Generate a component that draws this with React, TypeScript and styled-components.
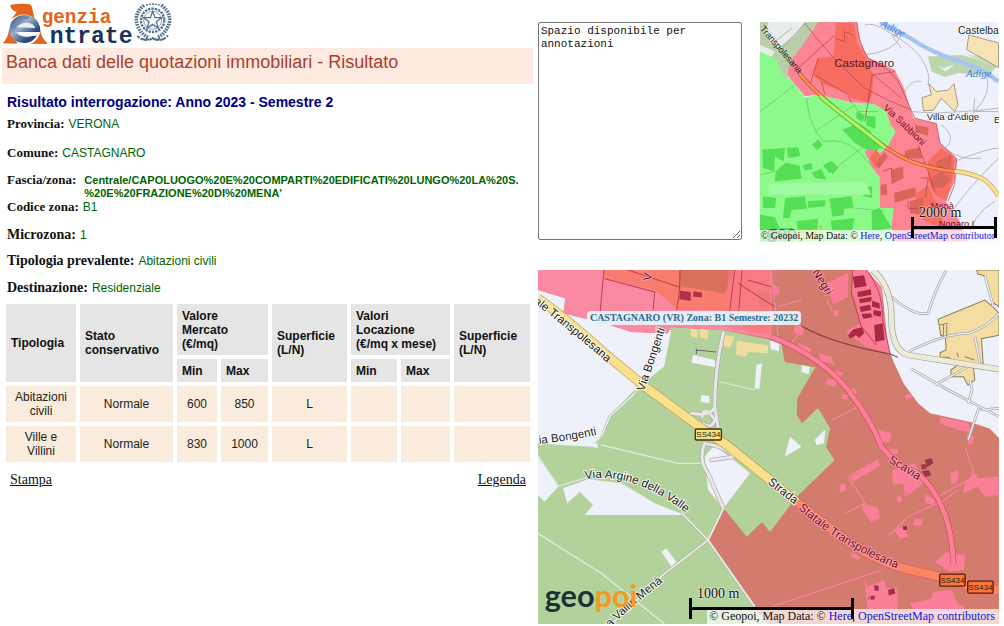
import React from "react";
import styled, { createGlobalStyle } from "styled-components";

const SANS = '"Liberation Sans", Arial, sans-serif';
const SERIF = '"Liberation Serif", "Times New Roman", serif';
const MONO = '"Liberation Mono", "Courier New", monospace';

const GlobalStyle = createGlobalStyle`
  *, *::before, *::after { box-sizing: border-box; }
  body { margin: 0; background: #fff; color: #111; font-family: ${SERIF}; }
`;

const Page = styled.div`
  display: grid;
  grid-template-columns: minmax(0, 7fr) minmax(0, 6fr);
  padding-right: 5px;
`;

const Report = styled.main`
  display: flex;
  flex-direction: column;
  overflow: hidden;
`;

const LogoDrawing = styled.svg`
  display: block;
  width: 180px;
  height: 48px;
`;

const Banner = styled.h1`
  margin: 0 5px 0 2px;
  padding: 4px 4px 12px;
  background: #feeae0;
  color: #a8402c;
  font: 400 18px/20px ${SANS};
`;

const Heading = styled.h2`
  margin: 8px 7px 5px;
  color: #000080;
  font: 700 14px/20px ${SANS};
`;

const Fields = styled.dl`
  margin: 0 0 0 7px;
`;

const Field = styled.div<{ $after: number }>`
  display: flex;
  gap: 4px;
  margin-bottom: ${(p) => p.$after}px;
  line-height: 14px;
`;

const Term = styled.dt<{ $large?: boolean }>`
  flex: none;
  font-family: ${SERIF};
  font-size: ${(p) => (p.$large ? 14 : 13)}px;
  font-weight: 700;
`;

const Value = styled.dd<{ $long?: boolean }>`
  margin: 0 0 0 ${(p) => (p.$long ? 4 : 0)}px;
  padding-top: ${(p) => (p.$long ? 1 : 0)}px;
  color: #006400;
  font-family: ${SANS};
  font-size: ${(p) => (p.$long ? 11 : 12)}px;
  font-weight: ${(p) => (p.$long ? 700 : 400)};
  line-height: ${(p) => (p.$long ? 13 : 14)}px;
  white-space: nowrap;
`;

const Quotes = styled.table`
  width: calc(100% - 6px);
  margin-left: 2px;
  table-layout: fixed;
  border-collapse: separate;
  border-spacing: 4px;
  font: 400 12px/14px ${SANS};
`;

const Col = styled.col<{ $w: number }>`
  width: ${(p) => p.$w}px;
`;

const Row = styled.tr<{ $h: number }>`
  height: ${(p) => p.$h}px;
`;

const HeadCell = styled.th`
  padding: 0 5px;
  background: #e5e5e5;
  text-align: left;
  white-space: nowrap;
`;

const Cell = styled.td`
  padding: 0 4px;
  background: #faecdc;
  color: #222;
  text-align: center;
`;

const Actions = styled.nav`
  display: flex;
  justify-content: space-between;
  padding: 6px 12px 0 10px;
  font: 400 14px/16px ${SERIF};
`;

const ActionLink = styled.a`
  color: #111;
`;

const Side = styled.aside`
  display: flex;
  flex-direction: column;
  gap: 28px;
  padding-top: 22px;
`;

const SideTop = styled.div`
  display: grid;
  grid-template-columns: minmax(0, 6fr) minmax(0, 7fr);
  gap: 18px;
`;

const Notes = styled.textarea`
  width: 100%;
  height: calc(100% - 2px);
  padding: 2px;
  border: 1px solid #767676;
  border-radius: 2px;
  background: #fff;
  color: #111;
  font: 400 11px/13px ${MONO};
  resize: both;
`;

const MapFrame = styled.section<{ $ratio: string }>`
  position: relative;
  aspect-ratio: ${(p) => p.$ratio};
  overflow: hidden;
`;

const MapDrawing = styled.svg`
  display: block;
  width: 100%;
  height: 100%;
  font-family: ${SANS};
`;

const Attribution = styled.div<{ $small?: boolean }>`
  position: absolute;
  right: 0;
  bottom: 0;
  padding: 0 4px 0 2px;
  background: rgba(255, 255, 255, 0.7);
  color: #111;
  font-family: ${SERIF};
  font-size: ${(p) => (p.$small ? 10 : 12)}px;
  line-height: ${(p) => (p.$small ? 12 : 15)}px;
  white-space: nowrap;
`;

const MapLink = styled.a`
  color: #1414e0;
  text-decoration: none;
`;

const ScaleBar = styled.div<{ $right: number; $bottom: number; $w: number }>`
  position: absolute;
  right: ${(p) => p.$right}px;
  bottom: ${(p) => p.$bottom}px;
  width: ${(p) => p.$w}px;
  height: 21px;
  border: solid #000;
  border-width: 0 3px;
  background: linear-gradient(#000, #000) center / 100% 3px no-repeat;
`;

const ScaleText = styled.span`
  position: absolute;
  left: 5px;
  bottom: 18px;
  font: 400 14px/15px ${SERIF};
  text-shadow: 0 0 2px #fff, 0 0 2px #fff;
  white-space: nowrap;
`;

const ZoneTip = styled.div`
  position: absolute;
  top: 41px;
  left: 49px;
  padding: 0 3px;
  border-radius: 4px;
  background: rgba(232, 244, 250, 0.92);
  color: #1d6d96;
  font: 700 10px/14px ${SERIF};
  white-space: nowrap;
`;

function AgencyLogo() {
  return (
    <LogoDrawing viewBox="0 0 540 144" role="img" aria-label="Agenzia Entrate">
      <defs>
        <linearGradient id="ball" x1="0" y1="0" x2="1" y2="1">
          <stop offset="0" stopColor="#1b3f72" />
          <stop offset="0.4" stopColor="#9fb0c6" />
          <stop offset="0.7" stopColor="#2c5084" />
          <stop offset="1" stopColor="#0d2550" />
        </linearGradient>
      </defs>
      <path d="M30 15 Q50 10 84 12 Q94 13 96 22 L104 56 Q70 30 34 58 L50 36 Q34 32 30 15Z" fill="#e4641e" />
      <path d="M8 130 Q24 116 28 84 Q32 112 52 128 L50 131Z M92 131 Q116 122 121 92 Q126 116 142 129 L140 132Z" fill="#e4641e" />
      <path d="M28 94 Q28 58 58 47 Q96 38 114 66 Q122 80 121 96 L58 97 Q66 112 92 108 L112 104 Q98 130 72 129 Q32 127 28 94Z" fill="url(#ball)" />
      <path d="M50 82 Q64 64 88 69 Q102 72 106 84Z" fill="#e8edf4" />
      <path d="M48 97 L121 97 Q118 108 98 108 Q66 116 48 97Z" fill="#f8fafc" />
      <path d="M42 86 Q48 50 86 52" fill="none" stroke="#6f89ad" strokeWidth="7" />
      <text x="125" y="70" fontFamily={MONO} fontWeight="700" fontSize="58" fill="#e4641e">genzia</text>
      <text x="149" y="130" fontFamily={MONO} fontWeight="700" fontSize="69" fill="#1a315c">ntrate</text>
      <g fill="none" stroke="#53708f">
        <circle cx="458" cy="61" r="35" strokeWidth="7" strokeDasharray="7 3" />
        <circle cx="458" cy="61" r="27" strokeWidth="2" />
        <path d="M458 34 L465 53 L485 53 L469 65 L475 85 L458 73 L441 85 L447 65 L431 53 L451 53Z" strokeWidth="4" />
        <path d="M432 16 Q402 40 411 72 Q418 98 444 112" strokeWidth="11" strokeDasharray="5 3" />
        <path d="M484 16 Q516 40 507 72 Q498 98 474 112" strokeWidth="11" strokeDasharray="5 3" />
        <path d="M412 108 Q434 128 458 114 Q482 130 504 106 M424 118 L492 118" strokeWidth="6" strokeDasharray="9 3" />
        <path d="M438 16 Q458 8 480 16" strokeWidth="4" strokeDasharray="6 3" />
      </g>
    </LogoDrawing>
  );
}

function OverviewMap() {
  return (
    <MapDrawing viewBox="15 21 717 660" preserveAspectRatio="xMidYMid slice" aria-hidden="true">
      <defs>
        <path id="ov-trans" d="M14 42L140 188" />
        <path id="ov-sabb" d="M384 282Q450 340 520 414" />
        <path id="ov-adige" d="M376 34L480 84" />
      </defs>
      <rect x="15" y="21" width="717" height="660" fill="#eef0fb" />
      {/* fields north-west of the town */}
      <path d="M15 21H190L105 180L90 200L15 120Z" fill="#b9cfa9" />
      <path d="M40 21L150 21L120 60L70 100L30 60Z M15 90L60 110L40 140L15 120Z" fill="#e9ede9" />
      <path d="M80 100L150 25M60 80L110 40" stroke="#999" strokeWidth="2" fill="none" />
      {/* north-east: river and villages */}
      <path d="M520 125L620 120L732 150L700 180L610 175L570 186L530 170Z" fill="#bcd6ae" />
      <path d="M640 120L700 124L732 150L700 150Z" fill="#c9dfbd" />
      <path d="M548 150L565 160L600 148L572 170Z" fill="#eef0fb" />
      <path d="M376 21Q430 48 470 72Q530 112 610 138Q680 160 732 200" fill="none" stroke="#a5c5f0" strokeWidth="13" />
      <path d="M643 60L732 84L732 158L690 134L636 104Z M502 248L530 240L522 206L545 230L580 226L598 206L610 270L600 290L560 250L536 286L506 288Z" fill="#f7e2b4" stroke="#82765c" strokeWidth="2" />
      <g fill="none" stroke="#b9b9bd" strokeWidth="3">
        <path d="M330 30Q350 20 400 50Q470 90 500 130Q530 180 520 210M690 170Q720 230 660 290L732 290M330 120Q420 110 440 60M470 290Q560 300 732 280M600 440Q700 400 732 400M560 330Q610 370 570 400Q620 440 680 430M732 430Q640 520 600 580M640 681Q650 600 720 560" />
        <path d="M440 260Q460 190 500 200M410 60L440 100M660 250L655 320" />
      </g>
      {/* rural zone */}
      <path d="M15 110L60 130L90 190L105 190L150 248L190 240L290 262L380 270L400 300L414 340L422 350L400 392L370 420L345 400L330 410L352 458L374 485L376 580L416 580L410 640L420 681L15 681Z" fill="#8bfa8b" />
      <g fill="#54df55">
        <path d="M262 345L300 330L322 345L345 372L385 388L360 415L325 400L300 385Z M305 290L330 300L325 320L304 310Z M335 302L362 306L362 342L335 332Z M300 340L320 330L350 350L330 376Z" />
        <path d="M172 390L190 374L204 390L186 406Z M22 404L90 400L86 440L60 425L58 470L24 460Z M95 398L130 398L136 424L100 430Z M62 470L92 444L134 452L140 492L60 500Z M142 452L170 444L172 462L150 468Z M170 474L200 462L214 494L180 490Z M204 452L230 438L250 458L226 476Z M230 455L250 460L232 480Z" />
        <path d="M90 550L150 545L156 582L110 586L104 610L84 610Z M158 560L212 556L210 575L160 580Z M224 552L290 545L296 580L268 582L266 602L232 606Z M15 600L60 608L74 640L110 640L120 681L15 681Z M125 620L190 612L186 655L130 660Z M228 618L300 610L292 650L232 652Z M318 520L352 515L352 550L326 545Z M350 590L374 580L412 640L352 648Z M24 545L64 550L60 580L24 580Z" />
      </g>
      <path d="M40 508L330 500L350 540L44 540Z" fill="#a0fba0" />
      <g fill="none" stroke="#5ac65a" strokeWidth="2">
        <path d="M15 290L120 210M155 248Q160 330 205 380Q270 370 310 410Q350 450 370 480M180 350L300 270M315 290L320 370M230 470L320 400M300 580L390 590M15 480L60 470M295 265L310 290L370 290" />
      </g>
      {/* built-up zone */}
      <path d="M190 21H306L316 80L340 128L420 165L448 220L476 310L545 326L556 385L606 432L600 500L572 560L610 610L640 681H420L410 640L416 580L376 580L374 485L352 458L330 410L345 400L370 420L400 392L422 350L408 330L395 290L360 268L290 262L190 240L150 244L105 190L98 180L105 140L150 80Z" fill="#fb8592" />
      <path d="M244 24L298 24L306 80L330 125L356 180L352 240L340 262L290 250L282 236L205 208L172 180L188 130L236 124Z M345 430L365 405L380 425L362 460Z M520 440L560 400L600 430L594 490L575 560L540 540L520 500Z M482 540L520 510L560 600L570 640L510 620L486 600Z" fill="#f76d60" />
      <g fill="#d8665a">
        <path d="M480 330L522 338L520 362L484 352Z M450 408L496 398L502 432L450 430Z M410 465L445 455L446 490L410 510Z M418 535L482 518L484 545L420 565Z M362 450L388 412L400 425L372 462Z M378 510L395 508L398 540L378 542Z M545 440L590 420L590 456L548 466Z M526 490L560 470L590 496L560 520L530 516Z M465 560L505 550L506 600L466 596Z" />
      </g>
      <g fill="none" stroke="#b5404c" strokeWidth="2">
        <path d="M150 25Q220 120 330 220Q400 260 470 285M118 170L240 60M165 210L190 130M200 200L210 240M306 21Q312 90 340 130Q420 165 440 220L480 310L545 326M340 262L352 180L420 170M356 180L440 250M330 320L345 230M240 70L270 80L268 50L296 60M180 180L280 240L290 264M385 470L410 460L412 490M500 490L520 490L512 550M460 560L460 582L500 580M490 390L520 470L540 530M545 326L556 385L606 432L600 510L580 560" />
      </g>
      <path d="M130 172Q190 246 330 350Q400 410 470 440Q540 464 600 470" fill="none" stroke="#c64a34" strokeWidth="12" />
      <path d="M130 172Q190 246 330 350Q400 410 470 440Q540 464 600 470" fill="none" stroke="#fb9151" strokeWidth="8" />
      <path d="M195 243Q250 290 330 350L392 400" fill="none" stroke="#54b945" strokeWidth="14" />
      <path d="M195 243Q250 290 330 350L392 400" fill="none" stroke="#b7f45c" strokeWidth="9" />
      <path d="M600 470Q650 474 690 495Q715 515 732 545" fill="none" stroke="#baa169" strokeWidth="14" />
      <path d="M600 470Q650 474 690 495Q715 515 732 545" fill="none" stroke="#fae08c" strokeWidth="10" />
      {/* place names */}
      <text x="238" y="156" fontSize="35" fill="#5c1720">Castagnaro</text>
      <g fontSize="29" fill="#222" stroke="#fff" strokeWidth="4" paintOrder="stroke">
        <text x="516" y="315">Villa d'Adige</text>
        <text x="610" y="56" fontSize="31">Castelba</text>
        <text x="718" y="325">E</text>
      </g>
      <g fontSize="33" fontStyle="italic" fill="#3f7fd0" fontFamily={SERIF}>
        <text x="634" y="185">Adige</text>
        <text><textPath href="#ov-adige">Adige</textPath></text>
      </g>
      <text fontSize="27" fill="#222"><textPath href="#ov-trans">Transpolesana</textPath></text>
      <text fontSize="29" fill="#7c0f22"><textPath href="#ov-sabb">Via Sabbioni</textPath></text>
      <g fontSize="28" fill="#7c0f22">
        <text x="528" y="582">Menà</text>
        <text x="552" y="638">Nogaro L</text>
      </g>
      <text x="36" y="672" fontFamily="Lato, sans-serif" fontWeight="700" fontSize="56" fill="#24592b">
        geo<tspan fill="#b8d11c">poi</tspan>
      </text>
    </MapDrawing>
  );
}

function ZoneMap() {
  return (
    <MapDrawing viewBox="0 0 1383 1062" preserveAspectRatio="xMidYMid slice" aria-hidden="true">
      <defs>
        <path id="trans-nw" d="M-14 98Q90 175 226 294" />
        <path id="bongenti-n" d="M318 365Q344 290 388 158" />
        <path id="bongenti-w" d="M4 522Q100 512 204 488" />
        <path id="argine" d="M142 628Q300 600 476 756" />
        <path id="mena" d="M216 1072Q290 1000 390 924" />
        <path id="strada" d="M688 640L780 712" />
        <path id="statale" d="M780 716Q920 840 1100 904" />
        <path id="negri" d="M822 6L872 88" />
        <path id="scavia" d="M1050 576Q1100 604 1150 638" />
      </defs>
      <rect width="1383" height="1062" fill="#b3d29b" />
      {/* open land */}
      <g fill="#eef0fa">
        <path d="M0 60L400 180L378 290L290 360L212 440L190 500L160 530L60 524L0 520Z" />
        <path d="M0 555L60 650L20 695L0 675Z M75 655L150 628L250 640L350 700L440 735L140 735L165 705L125 665L88 700Z" />
        <path d="M985 0H1383V505L1356 486L1296 470L1176 440L1140 410L1096 340L1068 280L1050 230L1032 60Z" />
        <path d="M500 560L530 525L636 610L556 715L510 660Z M370 845L385 835L415 875L400 890Z M140 525L180 520L178 535Z" />
        <path d="M465 255L530 270L534 292L460 278Z M490 375L514 378L514 400L488 396Z M655 285L672 280L664 356L650 356Z M696 212L724 216L722 244L698 238Z M792 286L816 290L812 312L790 306Z M756 500L790 530L740 560Z M830 510L862 478L858 520L836 526Z" />
      </g>
      <path d="M190 500L215 440L290 370L316 330M0 560L62 648L150 622M0 790L190 910L380 1062M190 525L420 580L500 580" fill="none" stroke="#dfe8dc" strokeWidth="4" />
      <g fill="#f0dd9c">
        <path d="M456 176L480 180L478 205L460 200Z M484 176L512 180L508 208L486 202Z M560 195L590 200L576 234L556 228Z M596 212L690 226L690 250L632 246L622 260L594 254Z" />
      </g>
      {/* zone B1 */}
      <path d="M0 0H985L1032 60L1050 235L1068 280L1096 340L1140 400L1176 430L1296 456L1356 476L1383 505V1062H690L642 1005L510 810L556 714L626 800L672 756L696 786L776 680L890 570L864 532L876 475L840 414L792 460L776 435L778 385L832 292L740 276L730 222L690 208L552 180L396 172L390 190L280 186L200 160L76 130L82 84L0 60Z" fill="#d37c6d" />
      <path d="M0 0H700V205L552 180L396 172L390 190L280 186L200 160L76 130L82 84L0 60Z" fill="#fa8aa2" />
      <path d="M198 0H696V190L640 185L552 120L420 120L350 60L200 26Z" fill="#f97c70" />
      <path d="M205 30L350 66L352 125L190 120Z" fill="#fa8aa2" />
      <path d="M425 0H590L560 70L524 64L424 48Z M664 60L696 70V110L664 105Z" fill="#d9705c" />
      <path d="M572 0L696 0V200L560 170Z" fill="#fa7b88" opacity=".6" />
      <path d="M426 62L458 66V92L424 88Z M466 64L492 68V82L466 80Z" fill="#b03048" />
      <path d="M198 0L186 130M200 26L350 66L345 120M270 0L426 52L416 120M426 0L424 70M590 0L572 150M612 0L600 150M600 40L710 110M628 30L700 50" fill="none" stroke="#bd4054" strokeWidth="3" />
      {/* industrial strip and houses */}
      <path d="M866 40L930 8L930 80L885 104Z M944 0L985 0L1030 50L1040 180L1056 250L985 230L925 190L930 180L966 160L956 100L938 60Z" fill="#fb7d95" />
      <path d="M944 20L978 16L986 48L950 54Z M958 66L998 58L1000 74L960 82Z M962 88L1000 80V94L966 100Z M1002 92L1024 100L1026 116L1002 110Z M964 110L996 104L1000 120L968 126Z M970 132L998 130L1004 142L976 146Z M1006 120L1030 124L1028 140L1006 136Z M1008 165L1034 160L1040 210L1012 216Z M946 178L974 172L978 190L964 204L954 196L936 206L930 196Z" fill="#a92845" />
      <path d="M944 0L940 70L970 170L1016 225M985 0Q1035 60 1034 150L1056 250" fill="none" stroke="#d23e62" strokeWidth="3" />
      <g fill="#fb7f98">
        <path d="M704 45L725 52L722 74L702 72Z M770 164L800 168L794 196L768 190Z M782 220L820 236L812 256L780 250Z M842 248L880 262L890 284L846 272Z M896 300L914 310L906 324L892 316Z M864 326L898 330L892 350L866 346Z M936 355L956 360L952 378L934 374Z M914 372L930 376L926 390L912 386Z M888 120L904 122L898 140L886 136Z M1100 378L1120 370L1122 382L1104 390Z M1204 440L1290 458L1300 488L1260 480L1206 460Z M1288 490L1308 500L1302 525L1290 522Z M1020 478L1060 490L1056 515L1030 520Z" />
        <path d="M938 620L1020 570L1026 588L944 635Z M1050 540L1080 536L1078 550L1056 556Z M1062 600L1130 580L1156 640L1120 668L1100 680L1096 640L1064 644Z M904 645L920 640L926 660L906 668Z M972 700L1020 714L1026 744L1000 756L976 724Z M1236 610L1262 600L1256 640L1240 642Z M1280 638L1310 610L1320 625L1383 620V676L1340 680L1320 650L1276 670Z M1160 670L1190 690L1184 705L1162 698Z M1080 676L1092 684L1086 700L1076 690Z M1068 780L1098 768L1110 800L1086 806Z M1130 748L1156 744L1150 768L1126 764Z M1190 876L1226 846L1280 856L1278 900L1236 905Z M980 952L1038 930L1060 1015L990 1022Z M1044 955L1078 952L1078 1015L1056 1018Z M1116 1000L1180 985L1186 965L1242 960L1256 998L1280 1010L1276 1030L1130 1030Z M940 845L968 862L960 870L938 858Z" />
      </g>
      <path d="M1160 570L1180 564L1186 580L1166 592Z M1148 584L1162 582L1166 596L1152 598Z M1152 604L1172 600L1180 616L1160 622Z M1008 945L1022 948V962L1010 962Z M990 980L1010 976V988L992 990Z M1050 960L1068 954L1072 970L1052 976Z M1094 768L1106 768L1108 780L1096 780Z" fill="#9f3349" />
      <g fill="none" stroke="#f98198" strokeWidth="4">
        <path d="M700 0L720 200M760 220L790 180M720 110L790 90M882 120L866 90M880 452L960 410L976 430M1020 570L930 620L982 700L920 730M1280 530L1306 600L1300 625L1200 680M1220 690L1110 740L1050 800M1220 690L1260 660M1030 900L970 920L700 1010M980 930L1010 1040" />
      </g>
      <path d="M700 200Q850 260 930 360Q1000 450 1030 530Q1080 590 1140 610Q1240 700 1246 880" fill="none" stroke="#cf4d66" strokeWidth="18" />
      <path d="M700 200Q850 260 930 360Q1000 450 1030 530Q1080 590 1140 610Q1240 700 1246 880" fill="none" stroke="#fb7f95" strokeWidth="14" />
      <path d="M790 168Q880 220 1056 252L1080 262" fill="none" stroke="#7c3d46" strokeWidth="3" />
      {/* eastern hamlet */}
      <g fill="#f3dda0" stroke="#8d7d59" strokeWidth="3">
        <path d="M1316 0H1383V110L1362 96L1340 18L1320 12Z M1200 148L1340 90L1366 112L1383 130V196L1330 206L1336 290L1306 290L1310 330L1290 346L1276 320L1240 320L1238 300L1256 288L1232 262L1206 262L1206 248L1224 240L1222 200L1208 196Z" />
      </g>
      <path d="M1060 80Q1130 140 1170 130Q1190 60 1225 0M1112 245Q1220 190 1290 190Q1350 170 1383 130M1118 296L1230 360L1383 440M1190 345L1290 290M1296 330L1302 360L1290 400M1383 415L1320 420L1290 510M1310 200L1326 280M1340 18L1366 110" fill="none" stroke="#a3a6ac" strokeWidth="8" />
      <path d="M1060 80Q1130 140 1170 130Q1190 60 1225 0M1112 245Q1220 190 1290 190Q1350 170 1383 130M1118 296L1230 360L1383 440M1190 345L1290 290M1296 330L1302 360L1290 400M1383 415L1320 420L1290 510M1310 200L1326 280M1340 18L1366 110" fill="none" stroke="#eef0f2" strokeWidth="4" />
      <path d="M1004 0Q1060 50 1060 140Q1060 240 1110 255L1383 298" fill="none" stroke="#9f9f91" strokeWidth="19" />
      <path d="M1004 0Q1060 50 1060 140Q1060 240 1110 255L1383 298" fill="none" stroke="#ecead8" strokeWidth="15" />
      <path d="M1204 165L1230 160M1216 165V200M1226 165V200M1256 248L1262 262M1280 260L1310 270" stroke="#91825f" strokeWidth="3" />
      {/* junction ramps */}
      <g fill="none" stroke="#a9abb0" strokeWidth="13" strokeLinecap="round">
        <path d="M556 188Q530 300 530 410Q520 440 460 430M530 410L540 470M492 440Q500 400 530 450Q520 480 494 460M500 520Q480 570 510 610L556 715M500 520Q560 530 590 560L520 570" />
      </g>
      <g fill="none" stroke="#e9e6e6" strokeWidth="9" strokeLinecap="round">
        <path d="M556 188Q530 300 530 410Q520 440 460 430M530 410L540 470M492 440Q500 400 530 450Q520 480 494 460M500 520Q480 570 510 610L556 715M500 520Q560 530 590 560L520 570" />
      </g>
      <path d="M556 715L510 810M430 728L510 810L650 1010M510 810L380 910L220 1062M190 500L215 440L290 370" fill="none" stroke="#a8b39f" strokeWidth="8" />
      <path d="M556 715L510 810M430 728L510 810L650 1010M510 810L380 910L220 1062M190 500L215 440L290 370" fill="none" stroke="#eceee9" strokeWidth="5" />
      <path d="M475 240L534 246M475 252V236" fill="none" stroke="#667" strokeWidth="3" />
      <path d="M545 335L650 360" fill="none" stroke="#dfe8dc" strokeWidth="3" />
      {/* state road */}
      <path d="M0 85Q90 150 206 255L321 350L491 475L566 525L696 630L780 700" fill="none" stroke="#b99c58" strokeWidth="29" />
      <path d="M0 85Q90 150 206 255L321 350L491 475L566 525L696 630L780 700" fill="none" stroke="#f9e08a" strokeWidth="25" />
      <path d="M776 696L876 775Q980 860 1096 895L1206 920L1300 948L1383 960" fill="none" stroke="#cf5c63" strokeWidth="29" />
      <path d="M776 696L876 775Q980 860 1096 895L1206 920L1300 948L1383 960" fill="none" stroke="#fb8664" strokeWidth="25" />
      {/* street names */}
      <g fontSize="35" fill="#222" stroke="#fff" strokeOpacity=".8" strokeWidth="6" paintOrder="stroke">
        <text><textPath href="#trans-nw">ale Transpolesana</textPath></text>
        <text><textPath href="#bongenti-n">Via Bongenti</textPath></text>
        <text><textPath href="#bongenti-w">ia Bongenti</textPath></text>
        <text><textPath href="#argine">Via Argine della Valle</textPath></text>
        <text><textPath href="#mena">a Vallin Menà</textPath></text>
        <text><textPath href="#strada">Strada</textPath></text>
      </g>
      <g fontSize="35" fill="#6c1020" stroke="#fca3ae" strokeWidth="5" paintOrder="stroke">
        <text><textPath href="#statale">Statale Transpolesana</textPath></text>
        <text><textPath href="#negri">Negri</textPath></text>
        <text><textPath href="#scavia">Scavia</textPath></text>
        <text x="330" y="24" transform="rotate(-80 340 24)">V</text>
      </g>
      <g stroke="#3d3414" strokeWidth="4">
        <rect x="472" y="477" width="78" height="33" rx="3" fill="#f7e27e" />
        <rect x="1205" y="912" width="76" height="36" rx="3" fill="#f7783f" stroke="#6a1010" />
        <rect x="1289" y="933" width="76" height="36" rx="3" fill="#f7783f" stroke="#6a1010" />
      </g>
      <g fontSize="24" fill="#2b2208" textAnchor="middle" fontFamily={SANS}>
        <text x="511" y="502">SS434</text>
        <text x="1243" y="939">SS434</text>
        <text x="1327" y="960">SS434</text>
      </g>
      <text x="20" y="1012" fontFamily="Lato, sans-serif" fontWeight="700" fontSize="92" fill="#1c3038">
        geo<tspan fill="#f49b1f">poi</tspan>
      </text>
    </MapDrawing>
  );
}

function Credits({ small }: { small?: boolean }) {
  return (
    <Attribution $small={small}>
      © Geopoi, Map Data: © <MapLink href="#here">Here</MapLink>,{" "}
      <MapLink href="#osm">OpenStreetMap contributor{small ? "" : "s"}</MapLink>
    </Attribution>
  );
}

const fields: { term: string; lines: string[]; after: number; large?: boolean }[] = [
  { term: "Provincia:", lines: ["VERONA"], after: 15 },
  { term: "Comune:", lines: ["CASTAGNARO"], after: 13 },
  {
    term: "Fascia/zona:",
    lines: [
      "Centrale/CAPOLUOGO%20E%20COMPARTI%20EDIFICATI%20LUNGO%20LA%20S.",
      "%20E%20FRAZIONE%20DI%20MENA'",
    ],
    after: 0,
  },
  { term: "Codice zona:", lines: ["B1"], after: 14 },
  { term: "Microzona:", lines: ["1"], after: 12, large: true },
  { term: "Tipologia prevalente:", lines: ["Abitazioni civili"], after: 13, large: true },
  { term: "Destinazione:", lines: ["Residenziale"], after: 5, large: true },
];

const columns = [70, 93, 40, 47, 75, 46, 49, 76];

const rows = [
  ["Abitazioni civili", "Normale", "600", "850", "L", "", "", ""],
  ["Ville e Villini", "Normale", "830", "1000", "L", "", "", ""],
];

export default function App() {
  return (
    <>
      <GlobalStyle />
      <Page>
        <Report>
          <AgencyLogo />
          <Banner>Banca dati delle quotazioni immobiliari - Risultato</Banner>
          <Heading>Risultato interrogazione: Anno 2023 - Semestre 2</Heading>
          <Fields>
            {fields.map((f) => (
              <Field key={f.term} $after={f.after}>
                <Term $large={f.large}>{f.term}</Term>
                <Value $long={f.lines.length > 1}>
                  {f.lines.map((line) => (
                    <div key={line}>{line}</div>
                  ))}
                </Value>
              </Field>
            ))}
          </Fields>
          <Quotes>
            <colgroup>
              {columns.map((w, i) => (
                <Col key={i} $w={w} />
              ))}
            </colgroup>
            <thead>
              <Row $h={51}>
                <HeadCell rowSpan={2}>Tipologia</HeadCell>
                <HeadCell rowSpan={2}>Stato<br />conservativo</HeadCell>
                <HeadCell colSpan={2}>Valore<br />Mercato<br />(€/mq)</HeadCell>
                <HeadCell rowSpan={2}>Superficie<br />(L/N)</HeadCell>
                <HeadCell colSpan={2}>Valori<br />Locazione<br />(€/mq x mese)</HeadCell>
                <HeadCell rowSpan={2}>Superficie<br />(L/N)</HeadCell>
              </Row>
              <Row $h={23}>
                <HeadCell>Min</HeadCell>
                <HeadCell>Max</HeadCell>
                <HeadCell>Min</HeadCell>
                <HeadCell>Max</HeadCell>
              </Row>
            </thead>
            <tbody>
              {rows.map((r) => (
                <Row key={r[0]} $h={36}>
                  {r.map((c, i) => (
                    <Cell key={i}>{c}</Cell>
                  ))}
                </Row>
              ))}
            </tbody>
          </Quotes>
          <Actions>
            <ActionLink href="#stampa">Stampa</ActionLink>
            <ActionLink href="#legenda">Legenda</ActionLink>
          </Actions>
        </Report>
        <Side>
          <SideTop>
            <Notes aria-label="Annotazioni" defaultValue="Spazio disponibile per annotazioni" />
            <MapFrame $ratio="239 / 220" aria-label="Mappa di inquadramento">
              <OverviewMap />
              <Credits small />
              <ScaleBar $right={2} $bottom={4} $w={86}>
                <ScaleText>2000 m</ScaleText>
              </ScaleBar>
            </MapFrame>
          </SideTop>
          <MapFrame $ratio="461 / 354" aria-label="Mappa della zona">
            <ZoneMap />
            <ZoneTip>CASTAGNARO (VR) Zona: B1 Semestre: 20232</ZoneTip>
            <Credits />
            <ScaleBar $right={145} $bottom={5} $w={165}>
              <ScaleText>1000 m</ScaleText>
            </ScaleBar>
          </MapFrame>
        </Side>
      </Page>
    </>
  );
}
